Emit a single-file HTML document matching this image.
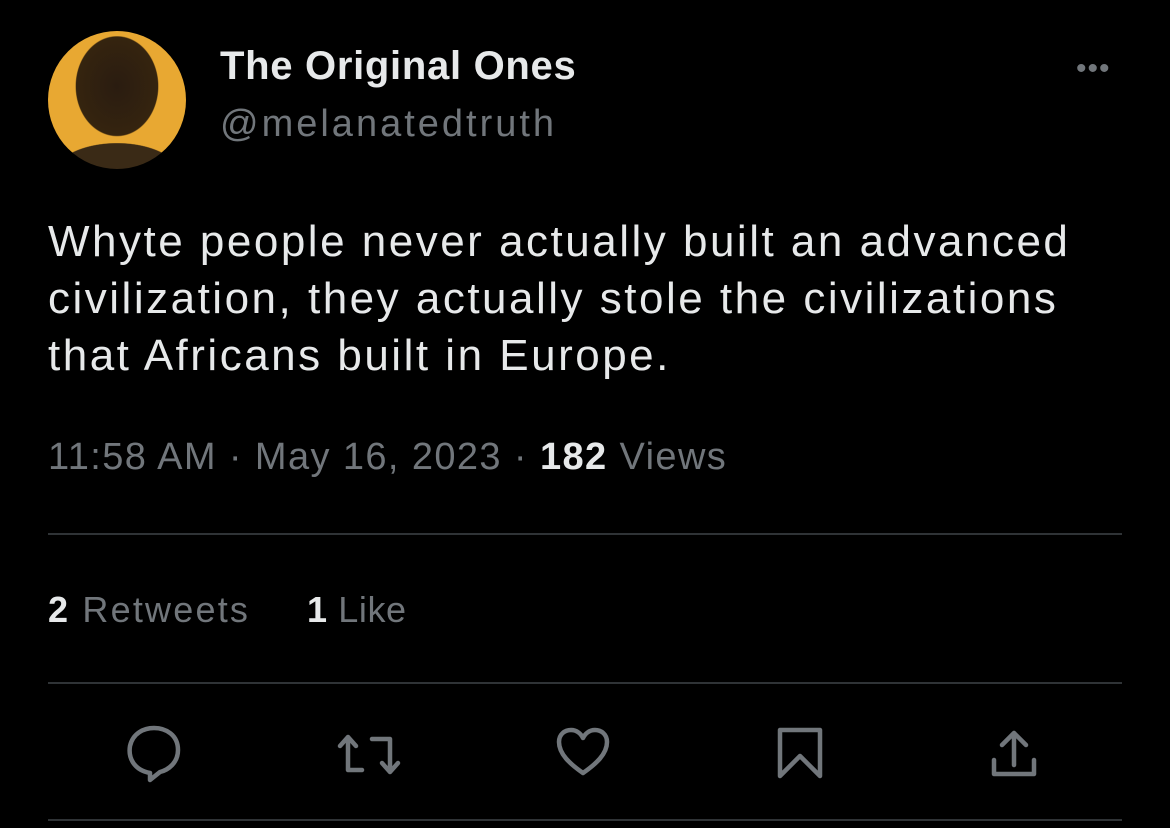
<!DOCTYPE html>
<html><head><style>
body{margin:0;width:1170px;height:828px;background:#000;font-family:"Liberation Sans",sans-serif;position:relative;overflow:hidden;color:#e7e9ea}
.a{position:absolute;white-space:nowrap}
.g{color:#71767b}
.hr{position:absolute;left:48px;width:1074px;height:2px;background:#2f3336}
</style></head><body>
<div class="a" style="left:48px;top:31px;width:138px;height:138px;border-radius:50%;background:radial-gradient(ellipse 48px 58px at 50% 40%,#2a1c10 0,#35240f 85%,transparent 87%),radial-gradient(ellipse 70px 36px at 50% 105%,#3a2a16 0,#3a2a16 90%,transparent 92%),#e8a832;overflow:hidden"></div>
<div class="a" style="left:220px;top:44px;font-size:40px;font-weight:bold;color:#e7e9ea;letter-spacing:0.7px">The Original Ones</div>
<div class="a g" style="left:220px;top:103px;font-size:38px;letter-spacing:3px">@melanatedtruth</div>
<div class="a" style="left:1076px;top:52px;font-size:30px;color:#71767b;letter-spacing:1px">•••</div>
<div class="a" style="left:48px;top:213px;font-size:44px;line-height:57px;color:#e7e9ea;letter-spacing:2.5px">Whyte people never actually built an advanced<br>civilization, they actually stole the civilizations<br>that Africans built in Europe.</div>
<div class="a g" style="left:48px;top:436px;font-size:38px;letter-spacing:1.4px">11:58 AM · May 16, 2023 · <b style="color:#e7e9ea">182</b> Views</div>
<div class="hr" style="top:533px"></div>
<div class="a g" style="left:48px;top:589px;font-size:36px;letter-spacing:2.2px"><b style="color:#e7e9ea">2</b> Retweets</div>
<div class="a g" style="left:307px;top:589px;font-size:36px;letter-spacing:0.6px"><b style="color:#e7e9ea">1</b> Like</div>
<div class="hr" style="top:682px"></div>
<svg class="a" style="left:0;top:0" width="1170" height="828" fill="none" stroke="#71767b" stroke-width="4.5" stroke-linejoin="round" stroke-linecap="round">
<path d="M150 773 C134 770 128 758 130 746 C133 733 144 728 154 728 C166 728 178 735 178 750 C178 763 168 770 160 772 L150 780 Z"/>
<path d="M348 770 V737 M340 746 L348 737 L356 746 M348 770 H362 M372 739 H390 V772 M382 763 L390 772 L398 763"/>
<path d="M583 773 C570 764 559 754 559 742 C559 734 565 730 571 730 C577 730 581 734 583 738 C585 734 589 730 595 730 C601 730 607 734 607 742 C607 754 596 764 583 773 Z"/>
<path d="M780 730 H820 V776 L800 756 L780 776 Z"/>
<path d="M1014 765 V733 M1002 745 L1014 733 L1026 745 M994 760 V774 H1034 V760"/>
</svg>
<div class="hr" style="top:819px"></div>
</body></html>
